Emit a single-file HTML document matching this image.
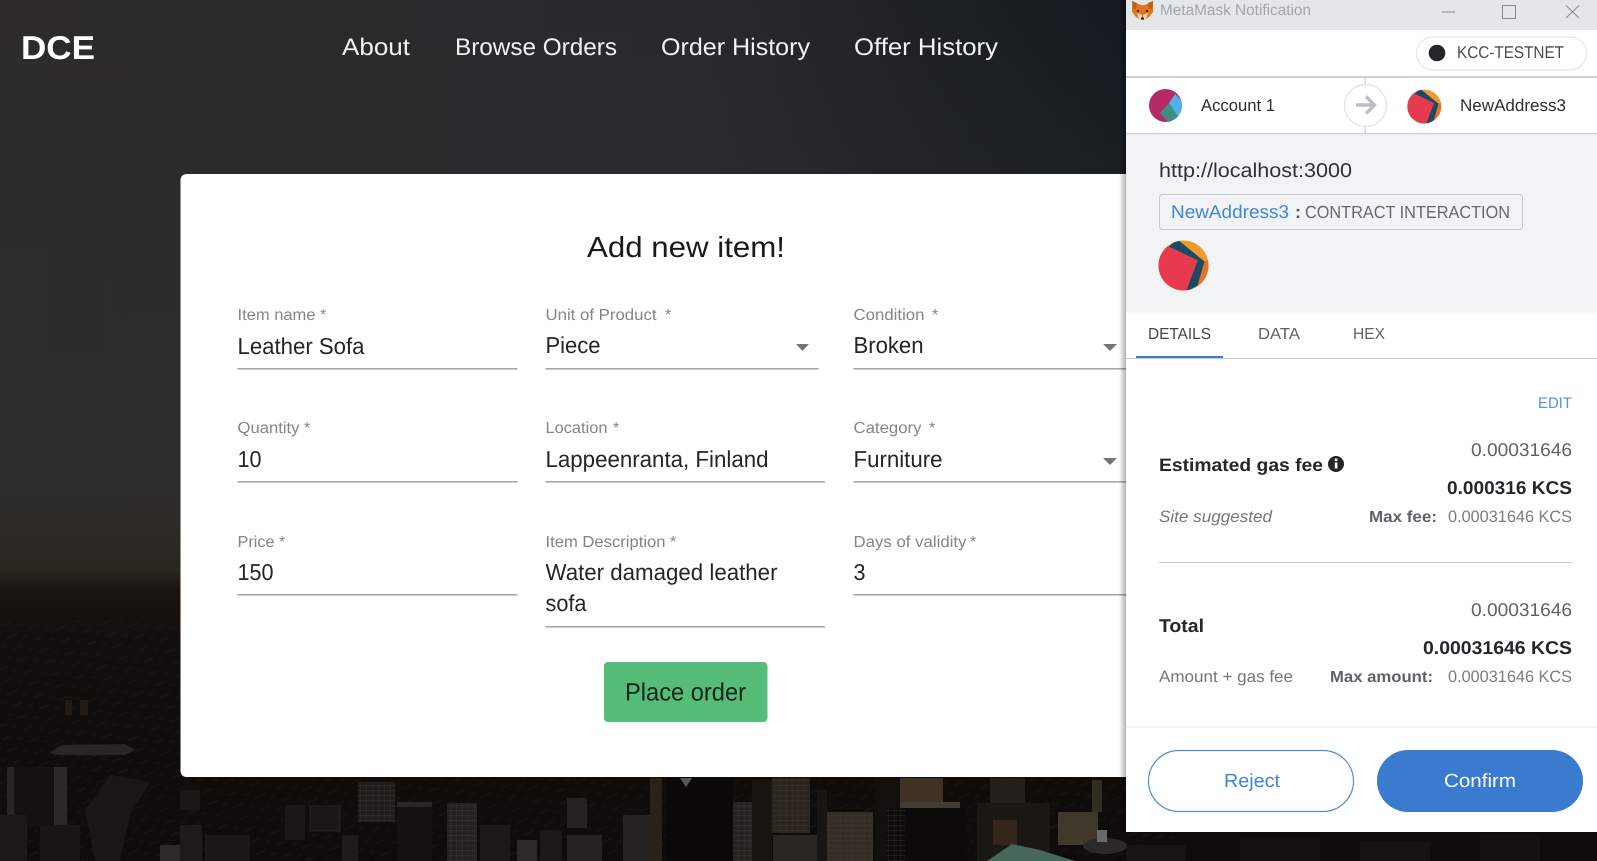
<!DOCTYPE html>
<html lang="en"><head><meta charset="utf-8"><title>Add new item</title>
<style>
html,body{margin:0;padding:0;background:#000;width:1597px;height:861px;overflow:hidden}
svg{display:block}
text{font-family:"Liberation Sans",sans-serif}
.lab{font-size:16px;fill:#858585}
.val{font-size:23px;fill:#252525}
.ul{fill:#a8a8a8}
.arr{fill:#757575}
.b{font-weight:bold}
</style></head><body>
<svg width="1597" height="861" viewBox="0 0 1597 861" xmlns="http://www.w3.org/2000/svg" text-rendering="geometricPrecision">
<defs>
<linearGradient id="h" x1="0" x2="1" y1="0" y2="0"><stop offset="0" stop-color="#2c2b29"/><stop offset=".45" stop-color="#27292c"/><stop offset=".72" stop-color="#12191f"/><stop offset="1" stop-color="#0e141b"/></linearGradient>
<linearGradient id="v" gradientUnits="userSpaceOnUse" x1="0" x2="0" y1="0" y2="861">
<stop offset="0" stop-color="#2e302e" stop-opacity="0"/>
<stop offset=".5" stop-color="#2e302e" stop-opacity=".6"/>
<stop offset=".6" stop-color="#2d2c28"/>
<stop offset=".66" stop-color="#2a2620"/>
<stop offset=".69" stop-color="#1a1410"/>
<stop offset=".74" stop-color="#120e0b"/>
<stop offset="1" stop-color="#0e0b09"/></linearGradient>
<linearGradient id="sh" x1="0" x2="1" y1="0" y2="0"><stop offset="0" stop-color="#000" stop-opacity="0"/><stop offset="1" stop-color="#000" stop-opacity=".3"/></linearGradient>
<pattern id="st" width="6" height="5" patternUnits="userSpaceOnUse"><rect width="6" height="1.2" fill="#4a433a" opacity=".3"/><rect width="1" height="5" fill="#4a433a" opacity=".2"/></pattern>
<pattern id="city" width="23" height="13" patternUnits="userSpaceOnUse" patternTransform="rotate(-24)"><rect width="11" height="1.5" fill="#2b2622" opacity=".3"/><rect x="14" y="6" width="6" height="2" fill="#241f1b" opacity=".3"/></pattern>
<clipPath id="c1"><circle cx="0" cy="0" r="25"/></clipPath>
<clipPath id="ca"><circle cx="1165.5" cy="105.5" r="16.5"/></clipPath>
<g id="blockie" clip-path="url(#c1)">
<rect x="-26" y="-26" width="52" height="52" fill="#ef9a2c"/>
<polygon points="21,-4 27,-7 27,16 10,26" fill="#e5712a"/>
<polygon points="-15,-19 -6,-26 21,-4 14,20 2,27 14,-5" fill="#1c4a63"/>
<polygon points="-15,-19 14,-5 2,27 -28,27 -28,-19" fill="#e83a4e"/>
</g>
</defs>

<!-- background -->
<rect width="1597" height="861" fill="url(#h)"/>
<rect width="1597" height="861" fill="url(#v)"/>
<rect x="0" y="620" width="180" height="241" fill="url(#city)"/>
<rect x="180" y="777" width="1000" height="84" fill="url(#city)"/>
<!-- left strip -->
<rect x="7" y="767" width="60" height="60" fill="#14120f"/>
<rect x="7" y="767" width="7" height="60" fill="#272523"/>
<rect x="54" y="767" width="13" height="60" fill="#2b2926"/>
<rect x="0" y="815" width="27" height="46" fill="#1b1917"/>
<rect x="40" y="825" width="40" height="36" fill="#181614"/>
<polygon points="50,752 62,745 125,744 135,750 125,755 55,755" fill="#282522"/>
<rect x="65" y="700" width="7" height="15" fill="#241a12"/>
<rect x="80" y="700" width="8" height="15" fill="#241a12"/>
<polygon points="85,810 110,775 150,782 130,815 120,861 95,861" fill="#191613"/>
<rect x="160" y="845" width="20" height="16" fill="#2c2a27"/>
<!-- below card -->
<g>
<rect x="180" y="790" width="20" height="20" fill="#1a1714"/>
<rect x="180" y="825" width="22" height="36" fill="#1d1b18"/>
<rect x="205" y="835" width="45" height="26" fill="#1a1815"/>
<rect x="285" y="805" width="20" height="35" fill="#191715"/>
<rect x="310" y="806" width="30" height="25" fill="#191715" stroke="#2a2724" stroke-width=".8"/>
<rect x="342" y="835" width="16" height="26" fill="#1d1b18"/>
<rect x="358" y="782" width="37" height="40" fill="#1f1d1b"/>
<rect x="358" y="782" width="37" height="40" fill="url(#st)"/>
<rect x="397" y="802" width="35" height="59" fill="#131211"/>
<rect x="397" y="802" width="35" height="5" fill="#2a2826"/>
<rect x="447" y="803" width="30" height="58" fill="#242220"/>
<rect x="447" y="803" width="30" height="58" fill="url(#st)"/>
<rect x="480" y="825" width="30" height="36" fill="#1b1917"/>
<rect x="517" y="840" width="20" height="21" fill="#2c2927"/>
<rect x="540" y="830" width="22" height="31" fill="#1b1917"/>
<rect x="567" y="798" width="20" height="30" fill="#242220"/>
<rect x="567" y="835" width="35" height="26" fill="#242220"/>
<rect x="623" y="815" width="30" height="46" fill="#252220"/>
<rect x="650" y="778" width="12" height="83" fill="#2c2119"/>
<rect x="667" y="777" width="66" height="84" fill="#0a0908"/>
<polygon points="680,778 692,778 686,787" fill="#5a5855"/>
<rect x="733" y="802" width="19" height="59" fill="#262220"/>
<rect x="733" y="802" width="19" height="59" fill="url(#st)"/>
<rect x="752" y="780" width="20" height="81" fill="#18140f"/>
<rect x="772" y="778" width="38" height="55" fill="#2a231e"/>
<rect x="772" y="778" width="38" height="55" fill="url(#st)"/>
<rect x="773" y="835" width="44" height="26" fill="#2a2723"/>
<rect x="817" y="790" width="10" height="71" fill="#191511"/>
<rect x="827" y="812" width="46" height="49" fill="#332d26"/>
<rect x="827" y="812" width="46" height="49" fill="url(#st)"/>
<rect x="875" y="778" width="25" height="83" fill="#120f0c"/>
<rect x="900" y="778" width="43" height="24" fill="#3f3225"/>
<rect x="900" y="802" width="60" height="8" fill="#433c32"/>
<rect x="887" y="808" width="80" height="53" fill="#0c0b09"/>
<rect x="887" y="808" width="18" height="53" fill="url(#st)"/>
<rect x="977" y="803" width="73" height="58" fill="#1b1814"/>
<rect x="990" y="778" width="35" height="25" fill="#231f1b"/>
<rect x="993" y="820" width="24" height="25" fill="#33271d"/>
<rect x="1058" y="812" width="40" height="33" fill="#40382a"/>
<rect x="1092" y="780" width="10" height="32" fill="#332c22"/>
<ellipse cx="1105" cy="846" rx="22" ry="8" fill="#2c2a29"/>
<rect x="1097" y="830" width="10" height="12" fill="#6a6a6a"/>
<polygon points="987,861 1012,844 1040,850 1075,861" fill="#46685b"/>
<rect x="1126" y="845" width="60" height="16" fill="#171513"/>
<rect x="1240" y="838" width="80" height="23" fill="#131110"/>
<rect x="1360" y="842" width="70" height="19" fill="#151311"/>
<rect x="1480" y="835" width="60" height="26" fill="#121110"/>
</g>

<!-- nav -->
<text x="21" y="59" font-size="33" class="b" fill="#fff" textLength="74" lengthAdjust="spacingAndGlyphs">DCE</text>
<g font-size="24" fill="#f2f2f2">
<text x="342" y="55" textLength="68" lengthAdjust="spacingAndGlyphs">About</text>
<text x="455" y="55" textLength="162" lengthAdjust="spacingAndGlyphs">Browse Orders</text>
<text x="661" y="55" textLength="149" lengthAdjust="spacingAndGlyphs">Order History</text>
<text x="854" y="55" textLength="144" lengthAdjust="spacingAndGlyphs">Offer History</text>
</g>

<!-- card -->
<rect x="180.5" y="174" width="980" height="603" rx="6" fill="#fff"/>
<text x="587" y="257" font-size="29" fill="#1a1a1a" textLength="198" lengthAdjust="spacingAndGlyphs">Add new item!</text>

<text class="lab" x="237.5" y="320" textLength="78" lengthAdjust="spacingAndGlyphs">Item name</text><text class="lab" x="320" y="320">*</text>
<text class="lab" x="545.5" y="320" textLength="111" lengthAdjust="spacingAndGlyphs">Unit of Product</text><text class="lab" x="665" y="320">*</text>
<text class="lab" x="853.5" y="320" textLength="71" lengthAdjust="spacingAndGlyphs">Condition</text><text class="lab" x="932" y="320">*</text>
<text class="lab" x="237.5" y="433" textLength="62" lengthAdjust="spacingAndGlyphs">Quantity</text><text class="lab" x="304" y="433">*</text>
<text class="lab" x="545.5" y="433" textLength="62" lengthAdjust="spacingAndGlyphs">Location</text><text class="lab" x="613" y="433">*</text>
<text class="lab" x="853.5" y="433" textLength="68" lengthAdjust="spacingAndGlyphs">Category</text><text class="lab" x="929" y="433">*</text>
<text class="lab" x="237.5" y="547" textLength="37" lengthAdjust="spacingAndGlyphs">Price</text><text class="lab" x="279" y="547">*</text>
<text class="lab" x="545.5" y="547" textLength="120" lengthAdjust="spacingAndGlyphs">Item Description</text><text class="lab" x="670" y="547">*</text>
<text class="lab" x="853.5" y="547" textLength="113" lengthAdjust="spacingAndGlyphs">Days of validity</text><text class="lab" x="970" y="547">*</text>

<text class="val" x="237.5" y="354" textLength="127" lengthAdjust="spacingAndGlyphs">Leather Sofa</text>
<text class="val" x="545.5" y="353" textLength="55" lengthAdjust="spacingAndGlyphs">Piece</text>
<text class="val" x="853.5" y="353" textLength="70" lengthAdjust="spacingAndGlyphs">Broken</text>
<text class="val" x="237.5" y="467" textLength="24" lengthAdjust="spacingAndGlyphs">10</text>
<text class="val" x="545.5" y="467" textLength="223" lengthAdjust="spacingAndGlyphs">Lappeenranta, Finland</text>
<text class="val" x="853.5" y="467" textLength="89" lengthAdjust="spacingAndGlyphs">Furniture</text>
<text class="val" x="237.5" y="580" textLength="36" lengthAdjust="spacingAndGlyphs">150</text>
<text class="val" x="545.5" y="580" textLength="232" lengthAdjust="spacingAndGlyphs">Water damaged leather</text>
<text class="val" x="545.5" y="611" textLength="41" lengthAdjust="spacingAndGlyphs">sofa</text>
<text class="val" x="853.5" y="580" textLength="12" lengthAdjust="spacingAndGlyphs">3</text>

<rect class="ul" x="237.5" y="368" width="280" height="1.6"/>
<rect class="ul" x="545.5" y="368" width="273" height="1.6"/>
<rect class="ul" x="853.5" y="368" width="273" height="1.6"/>
<rect class="ul" x="237.5" y="481" width="280" height="1.6"/>
<rect class="ul" x="545.5" y="481" width="279.5" height="1.6"/>
<rect class="ul" x="853.5" y="481" width="273" height="1.6"/>
<rect class="ul" x="237.5" y="594" width="280" height="1.6"/>
<rect class="ul" x="853.5" y="594" width="273" height="1.6"/>
<rect class="ul" x="545.5" y="626" width="279.5" height="1.6"/>
<polygon class="arr" points="796,344 809,344 802.5,351"/>
<polygon class="arr" points="1103,344 1117,344 1110,351"/>
<polygon class="arr" points="1103,458 1117,458 1110,465"/>

<rect x="604" y="662" width="163.5" height="60" rx="4" fill="#56bd79"/>
<text x="625" y="700.5" font-size="25" fill="#10241a" textLength="121" lengthAdjust="spacingAndGlyphs">Place order</text>

<!-- metamask panel -->
<rect x="1119" y="0" width="7" height="832" fill="url(#sh)"/>
<rect x="1126" y="0" width="471" height="832" fill="#fff"/>
<rect x="1126" y="0" width="471" height="30" fill="#e4e7ea"/>
<!-- fox -->
<g>
<polygon points="1132,1 1141,5 1145,5 1153,1 1153,12 1149,17 1144,20 1141,20 1136,17 1132,12" fill="#e2761b"/>
<polygon points="1132,1 1137,3 1136,9 1133,9" fill="#c0601a"/>
<polygon points="1153,1 1148,3 1149,9 1152,9" fill="#c0601a"/>
<polygon points="1137,13 1142,15 1142,20 1139,19" fill="#f0d8c0"/>
<polygon points="1148,13 1143,15 1143,20 1146,19" fill="#f0d8c0"/>
<circle cx="1138" cy="11" r="1.2" fill="#3a2a20"/><circle cx="1147" cy="11" r="1.2" fill="#3a2a20"/>
<rect x="1141" y="17.5" width="3" height="2" fill="#2a2320"/>
</g>
<text x="1160" y="15" font-size="15.5" fill="#a3a6a9" textLength="151" lengthAdjust="spacingAndGlyphs">MetaMask Notification</text>
<rect x="1442" y="11.5" width="13" height="1" fill="#8a8d90"/>
<rect x="1502.5" y="5.5" width="13" height="13" fill="none" stroke="#8a8d90"/>
<path d="M1566 5.5L1579 18M1579 5.5L1566 18" stroke="#8a8d90" stroke-width="1" fill="none"/>

<!-- network -->
<rect x="1416.5" y="37" width="170" height="33" rx="16.5" fill="#fff" stroke="#e4e6e8" stroke-width="1.2"/>
<circle cx="1437" cy="53" r="8.3" fill="#24272a"/>
<text x="1457" y="58" font-size="17" fill="#494c4f" textLength="107" lengthAdjust="spacingAndGlyphs">KCC-TESTNET</text>
<rect x="1126" y="76" width="471" height="2" fill="#ced0d3"/>

<!-- accounts -->
<g clip-path="url(#ca)">
<rect x="1149" y="89" width="34" height="34" fill="#b52a64"/>
<polygon points="1175,94 1184,103 1184,112 1178,117 1169,103" fill="#4fb0ea"/>
<polygon points="1169,103 1178,117 1170,124 1160,113" fill="#3d8f85"/>
</g>
<text x="1201" y="111" font-size="17" fill="#2b2e31" textLength="74" lengthAdjust="spacingAndGlyphs">Account 1</text>
<rect x="1364.5" y="78" width="1.5" height="56" fill="#d6d8da"/>
<circle cx="1365.5" cy="105.5" r="21" fill="#fff" stroke="#e0e2e4" stroke-width="1.2"/>
<path d="M1356 105H1374M1366 96.5L1374.5 105L1366 113.5" fill="none" stroke="#bcbfc4" stroke-width="3.4"/>
<use href="#blockie" transform="translate(1424.3 106.5) scale(.68)"/>
<text x="1460" y="111" font-size="17" fill="#2b2e31" textLength="106" lengthAdjust="spacingAndGlyphs">NewAddress3</text>
<rect x="1126" y="133" width="471" height="1.5" fill="#d2d4d7"/>

<!-- origin -->
<rect x="1126" y="134.5" width="471" height="178" fill="#f2f3f4"/>
<text x="1159" y="177" font-size="20" fill="#2f3134" textLength="193" lengthAdjust="spacingAndGlyphs">http://localhost:3000</text>
<rect x="1159.5" y="194.5" width="363" height="35" rx="3" fill="#f2f3f4" stroke="#c6c9cc"/>
<text x="1171" y="218" font-size="18.5" fill="#3f86d6" textLength="118" lengthAdjust="spacingAndGlyphs">NewAddress3</text>
<text x="1295" y="218" font-size="18" class="b" fill="#555">:</text>
<text x="1305" y="218" font-size="17.5" fill="#666a6e" textLength="205" lengthAdjust="spacingAndGlyphs">CONTRACT INTERACTION</text>
<use href="#blockie" transform="translate(1183.5 265.5)"/>

<!-- tabs -->
<g font-size="16">
<text x="1148" y="339" fill="#44474a" textLength="63" lengthAdjust="spacingAndGlyphs">DETAILS</text>
<text x="1258" y="339" fill="#5f6367" textLength="42" lengthAdjust="spacingAndGlyphs">DATA</text>
<text x="1353" y="339" fill="#5f6367" textLength="32" lengthAdjust="spacingAndGlyphs">HEX</text>
</g>
<rect x="1126" y="358" width="471" height="1" fill="#c9cbce"/>
<rect x="1136" y="356" width="87" height="2" fill="#3a7cd0"/>

<!-- details -->
<text x="1538" y="408" font-size="15.5" fill="#4c94dc" textLength="34" lengthAdjust="spacingAndGlyphs">EDIT</text>
<text x="1159" y="471" font-size="18" class="b" fill="#24272a" textLength="164" lengthAdjust="spacingAndGlyphs">Estimated gas fee</text>
<circle cx="1336" cy="464" r="8" fill="#24272a"/>
<rect x="1334.8" y="462.5" width="2.6" height="6" fill="#fff"/><rect x="1334.8" y="458.5" width="2.6" height="2.6" fill="#fff"/>
<text x="1471" y="456" font-size="18.5" fill="#5f6367" textLength="101" lengthAdjust="spacingAndGlyphs">0.00031646</text>
<text x="1447" y="494" font-size="18.5" class="b" fill="#24272a" textLength="125" lengthAdjust="spacingAndGlyphs">0.000316 KCS</text>
<text x="1159" y="522" font-size="16.5" font-style="italic" fill="#74777a" textLength="113" lengthAdjust="spacingAndGlyphs">Site suggested</text>
<text x="1369" y="522" font-size="16" class="b" fill="#5f6367" textLength="68" lengthAdjust="spacingAndGlyphs">Max fee:</text>
<text x="1448" y="522" font-size="16.5" fill="#7a7d80" textLength="124" lengthAdjust="spacingAndGlyphs">0.00031646 KCS</text>
<rect x="1159" y="562" width="413" height="1" fill="#c6c8cb"/>
<text x="1159" y="632" font-size="18.5" class="b" fill="#24272a" textLength="45" lengthAdjust="spacingAndGlyphs">Total</text>
<text x="1471" y="616" font-size="18.5" fill="#5f6367" textLength="101" lengthAdjust="spacingAndGlyphs">0.00031646</text>
<text x="1423" y="654" font-size="18.5" class="b" fill="#24272a" textLength="149" lengthAdjust="spacingAndGlyphs">0.00031646 KCS</text>
<text x="1159" y="682" font-size="16.5" fill="#74777a" textLength="134" lengthAdjust="spacingAndGlyphs">Amount + gas fee</text>
<text x="1330" y="682" font-size="16" class="b" fill="#5f6367" textLength="103" lengthAdjust="spacingAndGlyphs">Max amount:</text>
<text x="1448" y="682" font-size="16.5" fill="#7a7d80" textLength="124" lengthAdjust="spacingAndGlyphs">0.00031646 KCS</text>

<!-- footer -->
<rect x="1126" y="726.5" width="471" height="1" fill="#e4e6e8"/>
<rect x="1148.5" y="750.5" width="205" height="61" rx="30.5" fill="#fff" stroke="#4a8dd8" stroke-width="1.2"/>
<text x="1224" y="787" font-size="19" fill="#3f86d6" textLength="56" lengthAdjust="spacingAndGlyphs">Reject</text>
<rect x="1377" y="750" width="206" height="62" rx="31" fill="#3a7bd0"/>
<text x="1444" y="787" font-size="19" fill="#fff" textLength="72" lengthAdjust="spacingAndGlyphs">Confirm</text>
</svg>
</body></html>
